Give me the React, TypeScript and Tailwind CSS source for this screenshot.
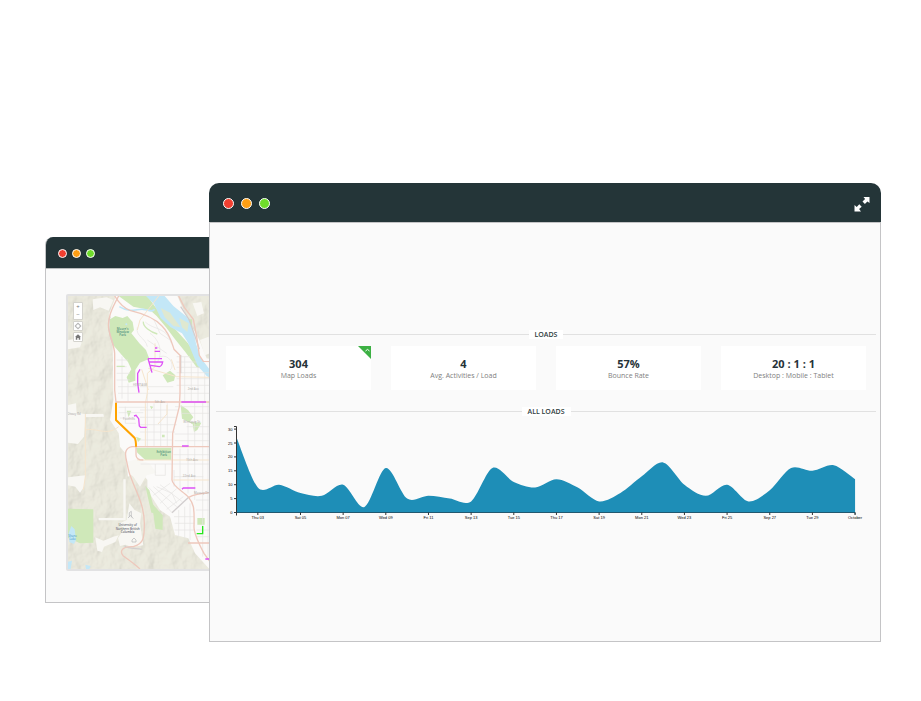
import React from "react";

const loads = [
  27, 9, 10, 7, 6, 10, 2, 16, 5, 6, 5, 4, 16, 11, 9, 12, 9, 4, 7, 13, 18, 10, 6,
  10, 4, 8, 16, 15, 17, 12,
];
const days = [
  "Thu 03", "Sat 05", "Mon 07", "Wed 09", "Fri 11", "Sep 13", "Tue 15", "Thu 17",
  "Sat 19", "Mon 21", "Wed 23", "Fri 25", "Sep 27", "Tue 29", "October",
];
const stats = [
  { value: "304", label: "Map Loads", up: true },
  { value: "4", label: "Avg. Activities / Load" },
  { value: "57%", label: "Bounce Rate" },
  { value: "20 : 1 : 1", label: "Desktop : Mobile : Tablet" },
];

const left = 20.5;
const base = 88.5;
const step = 21.33;
const unit = 2.78;
const px = (i: number) => left + i * step;
const py = (v: number) => base - v * unit;

// Cardinal spline through the daily values
function curve() {
  const t = 0.15;
  const pts = loads.map((v, i) => [px(i), py(v)]);
  let d = `M${pts[0][0]},${pts[0][1]}`;
  for (let i = 0; i < pts.length - 1; i++) {
    const a = pts[Math.max(i - 1, 0)];
    const b = pts[i];
    const c = pts[i + 1];
    const e = pts[Math.min(i + 2, pts.length - 1)];
    d += `C${b[0] + t * (c[0] - a[0])},${b[1] + t * (c[1] - a[1])} ${c[0] - t * (e[0] - b[0])},${c[1] - t * (e[1] - b[1])} ${c[0]},${c[1]}`;
  }
  return d;
}

function LoadsChart() {
  const end = px(loads.length - 1);
  return (
    <svg viewBox="0 0 660 101" className="mt-2 block w-full" role="img" aria-label="All loads by day">
      <path d={`${curve()}L${end},${base}L${left},${base}Z`} fill="#1e8eb7" />
      <g stroke="#333" strokeWidth="1" fill="none">
        <path d={`M18,2.5H${left}V${base + 3}`} />
        <path d={`M${left},${base}H${end}V${base + 2}`} stroke="#22586f" />
        {[0, 5, 10, 15, 20, 25, 30].map((v) => (
          <path key={v} d={`M18,${py(v)}H${left}`} />
        ))}
        {days.map((d, i) => (
          <path key={d} d={`M${px(i * 2 + 1)},${base}v2.5`} />
        ))}
      </g>
      <g fontSize="4" fill="#000" className="font-['Liberation_Sans',sans-serif]">
        {[0, 5, 10, 15, 20, 25, 30].map((v) => (
          <text key={v} x="16.5" y={py(v) + 1.5} textAnchor="end">{v}</text>
        ))}
        {days.map((d, i) => (
          <text key={d} x={px(i * 2 + 1)} y="95" textAnchor="middle">{d}</text>
        ))}
      </g>
    </svg>
  );
}

function Lights({ small = false }: { small?: boolean }) {
  const size = small ? "size-[9px]" : "size-[11px]";
  return (
    <div className={small ? "flex gap-[5px]" : "flex gap-[7px]"}>
      <span className={`${size} rounded-full border border-white bg-[#f23f30]`} />
      <span className={`${size} rounded-full border border-white bg-[#ff9f14]`} />
      <span className={`${size} rounded-full border border-white bg-[#6fdc2a]`} />
    </div>
  );
}

function Divider({ children }: { children: React.ReactNode }) {
  return (
    <div className="flex h-[9px] items-center">
      <span className="h-px flex-1 bg-[#e1e1e1]" />
      <h2 className="bg-white px-1.5 text-[7px] leading-[9px] font-semibold text-[#2f3c40]">{children}</h2>
      <span className="h-px flex-1 bg-[#e1e1e1]" />
    </div>
  );
}

const westHills =
  "M24,18H168L148,70 146,110 158,165 160,330 150,390 176,430 180,470 196,490 204,560 238,540 262,570 262,600 300,660 330,680 345,735 385,745 405,790 448,837H24Z";
const eastHills = "M352,18H474V210L440,205 418,150 385,90Z";

function CityMap() {
  return (
    <svg viewBox="24 18 450 819" className="block h-[273px] w-[150px]" role="img" aria-label="City map">
      <defs>
        <filter id="relief" x="0" y="0" width="100%" height="100%">
          <feTurbulence type="fractalNoise" baseFrequency="0.022 0.016" numOctaves="4" seed="8" />
          <feDiffuseLighting lightingColor="#f4f2e6" surfaceScale="12" diffuseConstant="1.15">
            <feDistantLight azimuth="215" elevation="58" />
          </feDiffuseLighting>
          <feComposite in2="SourceGraphic" operator="in" />
        </filter>
        <clipPath id="frame"><rect x="24" y="18" width="450" height="819" /></clipPath>
      </defs>
      <g clipPath="url(#frame)">
        <rect x="24" y="18" width="450" height="819" fill="#fbfaf9" />
        {/* Hills */}
        <g fill="#e7e6da">
          <path d={westHills} />
          <path d={eastHills} />
        </g>
        <g filter="url(#relief)" opacity="0.2">
          <path d={westHills} />
          <path d={eastHills} />
        </g>
        {/* Clearings */}
        <g fill="#f8f7f3">
          <path d="M98,28L140,22 160,30 146,62 120,52 100,60Z" />
          <path d="M24,150L52,146 65,158 60,172 24,178Z" />
          <path d="M24,345L48,340 50,368 76,372 130,372 132,380 76,382 72,440 54,462 24,458Z" />
          <path d="M24,562L76,556 72,590 60,608 46,590 24,586Z" />
          <path d="M190,568H197V690H190ZM116,684H196V691H116Z" />
          <path d="M208,640L224,660 244,670 240,700 246,740 250,766 216,772 196,764 180,768 174,744 190,720 180,700 200,690Z" />
          <path d="M106,742L130,752 160,740 176,736 166,756 132,770 126,786 112,782Z" />
          <path d="M202,515L228,508 268,520 290,548 260,556 240,590 220,560 206,548Z" />
          <path d="M398,40L424,36 432,70 412,78ZM420,150L446,140 450,190 434,196Z" />
        </g>
        {/* Parks */}
        <g fill="#cfe8b9">
          <path d="M150,88L166,78 188,84 202,78 218,96 222,120 214,130 238,160 258,180 268,206 240,218 226,240 226,272 206,278 200,262 214,238 204,216 186,196 160,166 148,122Z" />
          <path d="M176,18H262L300,70 350,122 384,160 418,212 430,238 410,232 376,186 344,146 318,112 290,78 270,60 220,50Z" />
          <path d="M24,656L100,658V758L60,760 34,748 24,744Z" />
          <path d="M228,473H334V510H256L232,488Z" />
          <path d="M362,345L384,360 400,382 388,396 424,398 412,420 402,426 398,402 366,386Z" />
          <path d="M308,256L330,242 346,256 342,272 322,278Z" />
          <path d="M276,640L308,676V720L286,716Z" />
          <path d="M256,588L268,600 286,670 274,668Z" />
          <path d="M366,88H396V108H374ZM200,362H214L206,382ZM412,684H434V704H412Z" />
          <path d="M270,348L280,350 274,358ZM306,434H314V442H306ZM228,440L244,446 234,456Z" />
        </g>
        {/* River and lakes */}
        <g fill="#c3e7f7">
          <path d="M258,18H314L340,48 380,80 396,108 408,160 420,200 450,240 474,254V278L440,258 412,226 384,158 366,130 332,112 302,84 282,42Z" />
          <path d="M34,708L44,718 48,750 42,762 28,756 26,730ZM24,815L36,812 32,837H24ZM76,824L92,828 88,837H78Z" />
          <circle cx="199" cy="103" r="3" />
        </g>
        <path d="M178,50C210,70 230,56 250,58S276,68 284,58" fill="none" stroke="#c3e7f7" strokeWidth="5" />
        <g fill="#dfe8d0">
          <path d="M302,54L330,68 350,96 362,112 340,108 314,82Z" />
          <path d="M358,84L386,100 382,126 366,112Z" />
        </g>
        {/* Local streets */}
        <g fill="none" stroke="#e6e4e2" strokeWidth="2">
          <path d="M170,210H204M170,230H200M170,250H210M170,270H210M174,290H230M186,200V326M204,280V334M174,310H450M240,290H340M176,352H260M176,368H250" />
          <path d="M232,112C226,140 256,142 262,170M256,96C280,120 320,110 334,160M270,130C300,150 310,190 290,220M282,90L300,130 330,150M300,200C330,190 346,230 330,240M262,150L320,190" />
          <path d="M350,200H390M350,216H410M350,232H420M350,248H450M350,266H450M350,286H450M374,200V334M394,220V334M414,232V334M434,250V334" />
          <path d="M262,310V472M282,340V470M302,340V470M322,340V470M240,360H356M240,382H350M240,404H350M240,426H345M240,450H336M196,400H228M180,384H224M196,350V400" />
          <path d="M345,350H450M364,370H450M380,410H450M344,432H450M344,452H450M384,400V470M404,336V470M428,336V800M444,336V800" />
          <path d="M242,522H450M340,494H450M342,560H430M360,476V600M384,476V610M404,476V630M286,522V556H316V522M342,540V590" />
          <path d="M266,592L336,668M280,590L350,650M300,584L368,636M280,616L330,580M300,640L350,596M320,658L370,620M290,590L336,610 350,640" />
          <path d="M342,680H402M344,700H404M344,720H404M356,660V740M374,650V744M390,640V750M408,630H450M408,660H450M410,720H450M410,740H450" />
        </g>
        <g fill="none" stroke="#f6e5cd" strokeWidth="3">
          <path d="M285,160V230L262,250V310L256,340V470M232,510H450M76,372V560L70,600M76,420C110,412 140,440 176,410M265,235L350,260 450,262M321,345V372L294,402M296,18C280,40 255,70 240,90L232,120" />
          <path d="M334,208L345,240M340,570H450M245,238L265,300" />
        </g>
        <path d="M250,95C248,110 272,126 292,132M170,229H194" fill="none" stroke="#cfe8b9" strokeWidth="4" />
        {/* Rail */}
        <path d="M150,80C140,112 152,142 160,166M362,50L388,90 402,130 418,178M245,778C232,774 206,778 194,768M336,668L386,622M362,195V250" fill="none" stroke="#d2cecf" strokeWidth="4" />
        {/* Highways */}
        <g fill="none" stroke="#eec8bc" strokeWidth="4">
          <path d="M164,18C180,44 192,56 212,62C246,70 282,82 306,108C330,132 336,160 342,178L360,196V310L358,350 338,430 336,570C338,590 370,604 386,622C400,640 404,650 402,710C402,730 416,760 432,790L450,815" />
          <path d="M176,18C154,58 142,86 146,116C152,150 162,164 164,190V300L168,336H450" />
          <path d="M450,470H216C194,474 194,492 200,514C204,534 206,548 212,560C230,610 252,642 253,700C253,744 252,760 220,770C190,768 176,782 190,798C210,812 226,824 240,837" />
          <path d="M228,470V494C228,506 236,510 250,510M356,18L374,54 400,88 410,140 418,196 430,214 474,215M386,622C400,614 420,610 450,608M384,759H450" />
        </g>
        <path d="M168,338V390L224,444Q228,450 228,470" fill="none" stroke="#ffa300" strokeWidth="6" />
        {/* Tracked segments */}
        <g fill="none" stroke="#dd52f6" strokeWidth="4">
          <path d="M285,174H292M284,184H300M264,206H306M276,248L264,206M268,216H308Q306,228 298,230L272,226" />
          <path d="M240,238L233,250V280L237,308M222,378L228,376 236,386 238,408 242,412H260M364,336H438M366,468H386M366,598L370,594H406M436,807H450" />
        </g>
        <path d="M410,731H428V708" fill="none" stroke="#27e71c" strokeWidth="4" />
        {/* Place names */}
        <g fontSize="9" textAnchor="middle" className="font-['Open_Sans',sans-serif]">
          <g fill="#4f9180" fontWeight="600">
            <text x="188" y="121">Moore's</text>
            <text x="188" y="130">Meadow</text>
            <text x="188" y="139">Park</text>
            <text x="311" y="488">Exhibition</text>
            <text x="311" y="498">Park</text>
          </g>
          <g fill="#3f97c7">
            <text x="38" y="740">Shane</text>
            <text x="38" y="750">Lake</text>
          </g>
          <g fill="#666a75" fontWeight="600">
            <text x="203" y="709">University of</text>
            <text x="203" y="719">Northern British</text>
            <text x="203" y="729">Columbia</text>
          </g>
          <g fill="#aaa6a3">
            <text x="240" y="287">HERITAGE</text>
            <text x="400" y="300">2nd Ave</text>
            <text x="300" y="339">5th Ave</text>
            <text x="395" y="398">Winnipeg St</text>
            <text x="396" y="513">15th Ave</text>
            <text x="388" y="562">22nd Ave</text>
            <text x="424" y="612">Massey Dr</text>
            <text x="207" y="390">Foothills</text>
            <text x="42" y="376">Otway Rd</text>
          </g>
        </g>
        <path d="M208,680V668L214,664V682M204,684L212,676 220,686M216,750L222,744 228,750V756H216Z" fill="none" stroke="#b4b5b6" strokeWidth="2" />
      </g>
    </svg>
  );
}

const mapButton =
  "flex size-2 items-center justify-center bg-white text-[6px] leading-none text-[#777]";

function MapControls() {
  return (
    <div className="absolute top-1.5 left-[5px] flex w-2.5 flex-col gap-px font-['Open_Sans',sans-serif]">
      <div className="flex flex-col rounded-[1px] border border-[#d4d3cd] bg-[#d4d3cd]">
        <button aria-label="Zoom in" className={mapButton}>+</button>
        <button aria-label="Zoom out" className={mapButton}>−</button>
      </div>
      <div className="rounded-[1px] border border-[#d4d3cd]">
        <button aria-label="Locate" className={mapButton}>
          <svg viewBox="0 0 8 8" className="size-2" fill="none" stroke="#999" strokeWidth="0.8">
            <circle cx="4" cy="4" r="2.2" />
            <path d="M4,0.8V2M4,6V7.2M0.8,4H2M6,4H7.2" />
          </svg>
        </button>
      </div>
      <div className="rounded-[1px] border border-[#d4d3cd]">
        <button aria-label="Home" className={mapButton}>
          <svg viewBox="0 0 8 8" className="size-2" fill="#777">
            <path d="M4,1.2L7,4H6.2V6.8H4.7V5H3.3V6.8H1.8V4H1Z" />
          </svg>
        </button>
      </div>
    </div>
  );
}

export default function App() {
  return (
    <main className="relative min-h-screen bg-white pt-[183px] pr-10 pb-[59px] pl-[209px] font-['Open_Sans',sans-serif]">
      <section aria-label="Map window" className="absolute top-[237px] left-[45px] w-[300px] overflow-hidden rounded-t-lg border border-t-0 border-[#c4c4c6] bg-[#fafafa]">
        <header className="flex h-8 items-center border-b border-[#b9bcbd] bg-[#243538] px-3 pt-0.5">
          <Lights small />
        </header>
        <div className="px-5 pt-[25px] pb-[31px]">
          <div className="relative overflow-hidden rounded-xs border-2 border-[#e2e2e3] bg-[#faf9f7]">
            <CityMap />
            <MapControls />
          </div>
        </div>
      </section>

      <section aria-label="Analytics window" className="relative overflow-hidden rounded-t-[10px] bg-[#243538]">
        <header className="flex h-[39px] items-center justify-between px-3.5 pt-0.5">
          <Lights />
          <button aria-label="Expand" className="-mr-[3px] flex size-4 items-center justify-center">
            <svg viewBox="0 0 16 16" className="size-4" fill="#fff">
              <path d="M9.5,1H15.5V7L13.4,5.4 10.9,7.9 8.5,5.5 11.1,3.1ZM0.5,9L2.7,10.9 5.3,8.3 7.7,10.7 5.1,13.1 7,15.5H0.5Z" />
            </svg>
          </button>
        </header>
        <div className="border border-[#c4c4c6] bg-[#fafafa] pt-[107px] pr-1 pb-[116px] pl-1.5">
          <Divider>LOADS</Divider>
          <div className="mx-2.5 mt-[7px] mb-[17px] grid grid-cols-4 gap-5">
            {stats.map((s) => (
              <article key={s.label} className="relative bg-white pt-[11px] pb-[9px] text-center">
                <p className="text-[11px] leading-[14px] font-bold text-[#263238]">{s.value}</p>
                <p className="text-[7px] leading-[10px] text-[#808080]">{s.label}</p>
                {s.up && (
                  <svg viewBox="0 0 13 13" className="absolute top-0 right-0 size-[13px]" aria-label="Up">
                    <path d="M0,0H13V13Z" fill="#3cb043" />
                    <path d="M7.5,5L9.5,3.4 11.5,5" fill="none" stroke="#fff" strokeWidth="1" />
                  </svg>
                )}
              </article>
            ))}
          </div>
          <Divider>ALL LOADS</Divider>
          <LoadsChart />
        </div>
      </section>
    </main>
  );
}
